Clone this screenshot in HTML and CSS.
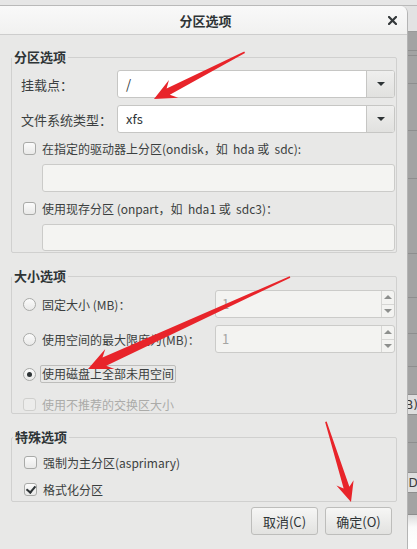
FILE: index.html
```html
<!DOCTYPE html>
<html lang="zh-CN">
<head>
  <meta charset="UTF-8">
  <title>分区选项</title>
  <link rel="stylesheet" href="styles.css">
</head>
<body>

  <!-- background window strip at the top -->
  <div class="topline"></div>

  <div class="screen">
    <!-- Partition options dialog -->
    <div class="dialog">
      <div class="titlebar">
        <span></span>
        <span class="title">分区选项</span>
        <svg class="close" width="9" height="9" viewBox="0 0 9 9">
          <path d="M1 1 L8 8 M8 1 L1 8" stroke="#34383a" stroke-width="2.2" stroke-linecap="square"/>
        </svg>
      </div>

      <div class="content">
        <fieldset class="frame frame-part">
          <legend>分区选项</legend>

          <div class="form-row">
            <label class="form-label">挂载点：</label>
            <div class="combo">
              <span class="combo-text">/</span>
              <span class="combo-btn"><i class="caret"></i></span>
            </div>
          </div>

          <div class="form-row row-fs">
            <label class="form-label">文件系统类型：</label>
            <div class="combo">
              <span class="combo-text">xfs</span>
              <span class="combo-btn"><i class="caret"></i></span>
            </div>
          </div>

          <div class="check-row row-ondisk">
            <span class="checkbox"></span>
            <span class="check-label">在指定的驱动器上分区(ondisk，如&nbsp; hda 或&nbsp; sdc):</span>
          </div>
          <div class="entry"></div>

          <div class="check-row row-onpart">
            <span class="checkbox"></span>
            <span class="check-label">使用现存分区 (onpart，如&nbsp; hda1 或&nbsp; sdc3)：</span>
          </div>
          <div class="entry entry-last"></div>
        </fieldset>

        <fieldset class="frame frame-size">
          <legend>大小选项</legend>

          <div class="spin-row">
            <span class="radio"></span>
            <span class="check-label">固定大小 (MB)：</span>
            <div class="spin">
              <span class="spin-text">1</span>
              <span class="spin-btns"><i class="up"></i><i class="down"></i></span>
            </div>
          </div>

          <div class="spin-row row-max">
            <span class="radio"></span>
            <span class="check-label">使用空间的最大限度为(MB)：</span>
            <div class="spin">
              <span class="spin-text">1</span>
              <span class="spin-btns"><i class="up"></i><i class="down"></i></span>
            </div>
          </div>

          <div class="check-row row-fill">
            <span class="radio checked"></span>
            <span class="check-label focused">使用磁盘上全部未用空间</span>
          </div>

          <div class="check-row row-swap disabled">
            <span class="checkbox"></span>
            <span class="check-label">使用不推荐的交换区大小</span>
          </div>
        </fieldset>

        <fieldset class="frame frame-special">
          <legend>特殊选项</legend>

          <div class="check-row row-primary">
            <span class="checkbox"></span>
            <span class="check-label">强制为主分区(asprimary)</span>
          </div>

          <div class="check-row row-format">
            <span class="checkbox checked"></span>
            <span class="check-label">格式化分区</span>
          </div>
        </fieldset>

        <div class="buttons">
          <button class="btn">取消(C)</button>
          <button class="btn">确定(O)</button>
        </div>
      </div>
    </div>

    <!-- window behind the dialog -->
    <div class="side">
      <div class="side-cell side-light"></div>
      <div class="side-cell" style="height:19px"></div>
      <div class="side-cell" style="height:5px"></div>
      <div class="side-cell" style="height:28px"></div>
      <div class="side-cell" style="height:47px"></div>
      <div class="side-cell" style="height:48px"></div>
      <div class="side-cell" style="height:75px"></div>
      <div class="side-cell" style="height:44px"></div>
      <div class="side-cell" style="height:36px"></div>
      <div class="side-cell" style="height:33px"></div>
      <div class="side-cell" style="height:28px"></div>
      <div class="side-cell side-text" style="height:20px">B)</div>
      <div class="side-cell" style="height:28px"></div>
      <div class="side-cell" style="height:30px"></div>
      <div class="side-cell side-text" style="height:20px">ID</div>
      <div class="side-cell" style="height:22px"></div>
      <div class="side-white"></div>
    </div>
  </div>

  <!-- red annotation arrows drawn over the screenshot -->
  <svg class="arrows" width="417" height="549" viewBox="0 0 417 549">
    <g fill="#e8242a">
      <polygon transform="translate(154,99) rotate(152.7)" points="0,0 -22,-10 -16,-3.5 -102,-0.8 -102,0.8 -16,3.5 -22,10"/>
      <polygon transform="translate(88,369) rotate(155.5)" points="0,0 -24,-11 -18,-4.5 -222,-0.8 -222,0.8 -18,4.5 -24,11"/>
      <polygon transform="translate(351,502) rotate(72.6)" points="0,0 -20,-9 -15,-3 -84,-0.8 -84,0.8 -15,3 -20,9"/>
    </g>
  </svg>

</body>
</html>
```

FILE: styles.css
```css
/* Page */
body {
  margin: 0;
  width: 417px;
  height: 549px;
  overflow: hidden;
  position: relative;
  background: #e4e4e4;
  font-family: "Noto Sans CJK SC", "Noto Sans", sans-serif;
  font-size: 13px;
  color: #2e3436;
}

.topline {
  height: 5px;
  border-bottom: 1px solid #b9b9b9;
  background: #e6e6e6;
}

.screen {
  display: flex;
  height: 543px;
}

/* Dialog window */
.dialog {
  width: 407px;
  flex: none;
  background: #e8e8e7;
  border-right: 1px solid #b4b4b4;
  border-top-right-radius: 7px;
  overflow: hidden;
}

.titlebar {
  height: 28px;
  display: grid;
  grid-template-columns: 1fr auto 1fr;
  align-items: center;
  background: linear-gradient(#f9f9f9, #f1f1f0);
  border-bottom: 1px solid #cdcdcd;
}

.title {
  font-weight: bold;
  font-size: 13px;
  padding-left: 4px;
}

.close {
  justify-self: end;
  margin-right: 10px;
}

.content {
  padding: 13px 10px 0 11px;
}

/* Frames (GTK style fieldsets) */
.frame {
  margin: 0;
  min-width: 0;
  border: 1px solid #d0d0cf;
  border-radius: 2px;
  padding: 4px 1px 1px 9px;
}

.frame legend {
  margin-left: -9px;
  padding: 0 2px;
  font-weight: bold;
  line-height: 18px;
}

.frame-size {
  margin-top: 14px;
  padding: 5px 1px 0 9px;
}

.frame-special {
  margin-top: 14px;
  padding: 7px 1px 3px 10px;
}

/* Label + combo rows */
.form-row {
  display: flex;
  align-items: center;
  height: 28px;
}

.row-fs {
  margin-top: 7px;
}

.form-label {
  width: 96px;
  flex: none;
  color: #3b3f40;
}

.combo {
  flex: 1;
  height: 28px;
  box-sizing: border-box;
  display: flex;
  border: 1px solid #c6c6c4;
  border-radius: 3px;
  background: #fff;
  overflow: hidden;
}

.combo-text {
  flex: 1;
  padding-left: 8px;
  line-height: 26px;
}

.combo-btn {
  width: 27px;
  display: flex;
  align-items: center;
  justify-content: center;
  border-left: 1px solid #c6c6c4;
  background: linear-gradient(#efefee, #e1e1df);
}

.caret {
  width: 0;
  height: 0;
  border-left: 4px solid transparent;
  border-right: 4px solid transparent;
  border-top: 4px solid #2e3436;
}

/* Check and radio rows */
.check-row {
  display: flex;
  align-items: center;
  height: 18px;
  padding-left: 2px;
}

.row-ondisk { margin-top: 6px; }
.row-onpart { margin-top: 7px; }
.row-fill { margin-top: 12px; }
.row-swap { margin-top: 12px; }
.row-format { margin-top: 9px; }

.checkbox,
.radio {
  width: 13px;
  height: 13px;
  box-sizing: border-box;
  flex: none;
  border: 1px solid #a9aaa8;
  background: linear-gradient(#fbfbfb, #e9e9e8);
  position: relative;
}

.checkbox {
  border-radius: 3px;
}

.radio {
  border-radius: 50%;
}

.radio.checked::after {
  content: "";
  position: absolute;
  left: 3px;
  top: 3px;
  width: 5px;
  height: 5px;
  border-radius: 50%;
  background: #2e3436;
}

.checkbox.checked::after {
  content: "";
  position: absolute;
  left: 3px;
  top: 0px;
  width: 4px;
  height: 7px;
  border: solid #2e3436;
  border-width: 0 2.5px 2.5px 0;
  transform: rotate(40deg);
}

.check-label {
  margin-left: 6px;
  white-space: nowrap;
  font-size: 12px;
  color: #3b3f40;
}

.check-label.focused {
  margin-left: 4px;
  padding: 0 1px;
  line-height: 16px;
  border: 1px solid #bdbdbb;
  border-radius: 2px;
}

.disabled .checkbox {
  border-color: #cfcfcd;
  background: #ececeb;
}

.disabled .check-label {
  color: #ababa9;
}

/* Entries */
.entry {
  margin: 7px 0 0 21px;
  height: 28px;
  box-sizing: border-box;
  border: 1px solid #cbcbc9;
  border-radius: 3px;
  background: #f4f4f2;
}

.entry-last {
  height: 27px;
}

/* Spin rows */
.spin-row {
  display: flex;
  align-items: center;
  height: 28px;
  padding-left: 2px;
}

.row-max {
  margin-top: 7px;
}

.spin {
  margin-left: auto;
  width: 180px;
  height: 28px;
  box-sizing: border-box;
  display: flex;
  border: 1px solid #cbcbc9;
  border-radius: 3px;
  background: #f3f3f1;
}

.spin-text {
  flex: 1;
  padding-left: 6px;
  line-height: 26px;
  color: #a4a5a3;
}

.spin-btns {
  width: 12px;
  display: flex;
  flex-direction: column;
  border-left: 1px solid #d6d6d4;
}

.spin-btns i {
  flex: 1;
  display: flex;
  align-items: center;
  justify-content: center;
}

.spin-btns .up {
  border-bottom: 1px solid #d6d6d4;
}

.spin-btns .up::after,
.spin-btns .down::after {
  content: "";
  border-left: 4px solid transparent;
  border-right: 4px solid transparent;
}

.spin-btns .up::after {
  border-bottom: 4px solid #8d8f8d;
}

.spin-btns .down::after {
  border-top: 4px solid #8d8f8d;
}

/* Dialog buttons */
.buttons {
  display: flex;
  justify-content: flex-end;
  gap: 7px;
  margin-top: 5px;
  padding-right: 5px;
}

.btn {
  width: 67px;
  height: 28px;
  border: 1px solid #bdbdbb;
  border-radius: 3px;
  background: linear-gradient(#f6f6f5, #e2e2e0);
  font-family: "Noto Sans CJK SC", "Noto Sans", sans-serif;
  font-size: 13px;
  color: #2e3436;
  padding: 0;
}

/* Window behind the dialog */
.side {
  flex: 1;
  display: flex;
  flex-direction: column;
  background: #a3a3a3;
}

.side-cell {
  flex: none;
  box-sizing: border-box;
  border-bottom: 1px solid #8e8e8e;
  font-family: "DejaVu Sans", sans-serif;
  font-size: 12px;
  line-height: 20px;
  color: #3a3a3a;
  white-space: nowrap;
  overflow: hidden;
}

.side-light {
  height: 26px;
  background: #e3e3e3;
  border-bottom-color: #9a9a9a;
}

.side-text {
  display: flex;
  align-items: center;
  background: #dedede;
  text-indent: -3px;
}

.side-white {
  flex: 1;
  background: linear-gradient(#dcdcdc, #fafafa 12px, #fff);
}

/* Annotation overlay */
.arrows {
  position: absolute;
  left: 0;
  top: 0;
  pointer-events: none;
}
```
